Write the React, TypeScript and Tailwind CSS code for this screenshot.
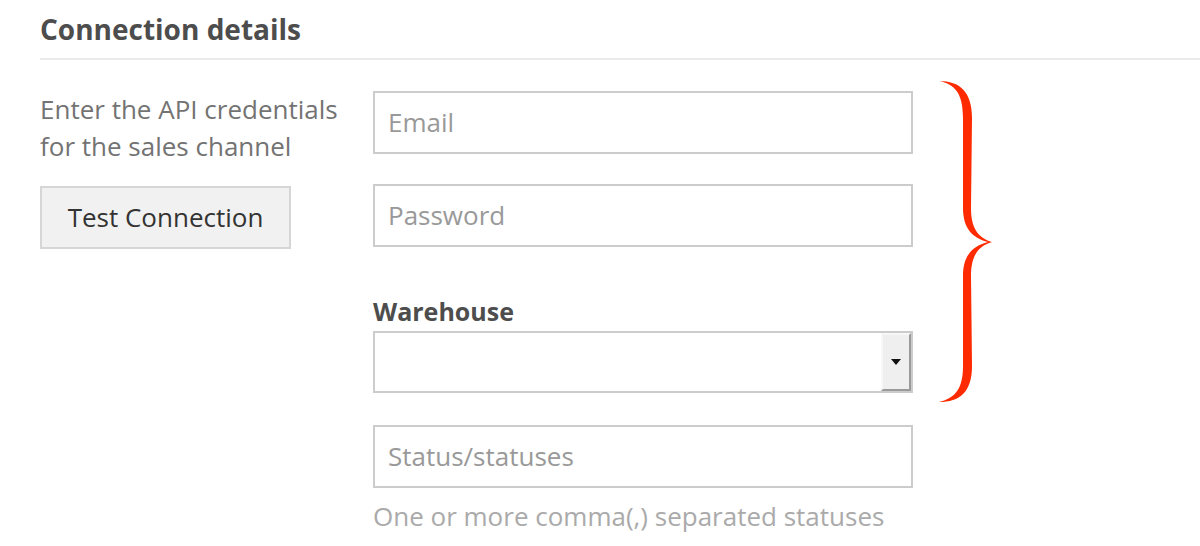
import React from "react";

export default function App() {
  return (
    <div
      className="w-[1200px] h-[546px] bg-white overflow-hidden pl-[40px]"
      style={{ fontFamily: '"Open Sans", "Noto Sans", sans-serif' }}
    >
      <div className="pt-[14px] pb-[14px] border-b-2 border-[#ebebeb]">
        <h2 className="text-[28px] leading-[30px] font-bold text-[#4d4d4d]">Connection details</h2>
      </div>
      <div className="flex mt-[31px]">
        <div className="w-[333px] shrink-0">
          <p className="text-[26px] leading-[37px] text-[#737373] whitespace-nowrap">
            Enter the API credentials
            <br />
            for the sales channel
          </p>
          <button className="mt-[21px] w-[251px] h-[63px] bg-[#f1f1f1] border-2 border-[#d6d6d6] text-[26px] text-[#333333]">
            Test Connection
          </button>
        </div>
        <div className="w-[540px] shrink-0 flex flex-col">
          <div className="h-[63px] border-2 border-[#cccccc] flex items-center pl-[13px] text-[26px] text-[#999999]">
            Email
          </div>
          <div className="mt-[30px] h-[63px] border-2 border-[#cccccc] flex items-center pl-[13px] text-[26px] text-[#999999]">
            Password
          </div>
          <label className="mt-[49px] text-[25px] leading-[30px] font-bold text-[#4d4d4d]">Warehouse</label>
          <div className="mt-[5px] h-[62px] border-2 border-[#cccccc] flex justify-end">
            <div className="w-[30px] h-full bg-[#efefef] border-t-2 border-l-2 border-[#f7f7f7] border-r-2 border-b-2 border-r-[#9a9a9a] border-b-[#9a9a9a] flex items-center justify-center">
              <svg width="10" height="6" viewBox="0 0 10 6">
                <path d="M0 0 L10 0 L5 6 Z" fill="#111" />
              </svg>
            </div>
          </div>
          <div className="mt-[32px] h-[63px] border-2 border-[#cccccc] flex items-center pl-[13px] text-[26px] text-[#999999]">
            Status/statuses
          </div>
          <p className="mt-[13px] text-[26px] leading-[30px] text-[#aaaaaa] whitespace-nowrap">One or more comma(,) separated statuses</p>
        </div>
        <div className="ml-[25px] -mt-[11px]">
          <svg width="56" height="324" viewBox="0 0 56 324">
            <path
              d="M1,1 C22,1 34,12 34,38 L33,128 C33,148 40,158 54,162 C40,166 33,176 33,196 L34,286 C34,312 22,322 1,322 C18,318 25,308 25,286 L25,196 C25,176 34,166 50,162 C34,158 25,148 25,128 L25,38 C25,12 16,4 1,1 Z"
              fill="#fe2a00"
            />
          </svg>
        </div>
      </div>
    </div>
  );
}
